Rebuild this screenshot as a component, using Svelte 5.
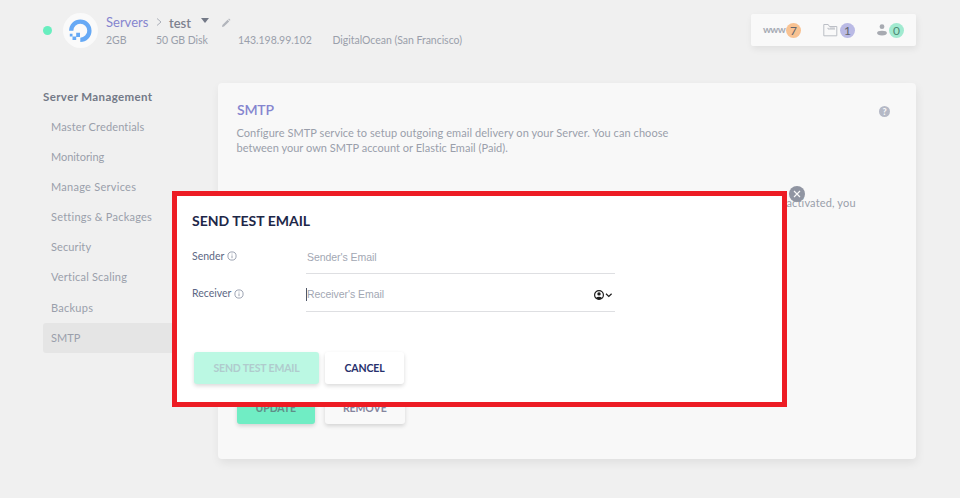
<script lang="ts">
  interface NavItem {
    label: string;
    spacing: number;
  }

  const nav: NavItem[] = [
    { label: "Master Credentials", spacing: 0.14 },
    { label: "Monitoring", spacing: -0.05 },
    { label: "Manage Services", spacing: 0.27 },
    { label: "Settings & Packages", spacing: 0.23 },
    { label: "Security", spacing: 0.1 },
    { label: "Vertical Scaling", spacing: 0.2 },
    { label: "Backups", spacing: 0.25 },
    { label: "SMTP", spacing: 0 },
  ];

  let active = $state("SMTP");
  let sender = $state("");
  let receiver = $state("");
  let open = $state(true);
</script>

{#snippet info()}
  <svg class="info" viewBox="0 0 10 10" width="10" height="10">
    <circle cx="5" cy="5" r="4.1" />
    <path d="M5 4.4v2.8M5 2.6v.9" />
  </svg>
{/snippet}

<div class="page">
  <header>
    <span class="status"></span>
    <span class="logo">
      <svg viewBox="0 0 24 24" width="24" height="24">
        <path class="ring" d="M2.2 11.7A9.1 9.1 0 1 1 11.3 20.8" />
        <path class="bits" d="M7.2 13.8h3.8v4.2H7.2zM3.5 17.6h3.7v3.5H3.5zM.8 14.8h2.7v2.6H.8z" />
      </svg>
    </span>
    <div class="server">
      <div class="crumbs">
        <a href="#servers">Servers</a>
        <svg class="sep" viewBox="0 0 6 8" width="6" height="8"><path d="M1 .5l4 3.5-4 3.5" /></svg>
        <strong>test</strong>
        <svg class="drop" viewBox="0 0 8 5" width="8" height="5"><path d="M0 0h8L4 5z" /></svg>
        <svg class="pencil" viewBox="0 0 10 10" width="10" height="10">
          <path d="M1 9l.4-2L6.6 1.8 8.2 3.4 3 8.6zM7.2 1.2L8 .5 9.5 2l-.8.8z" />
        </svg>
      </div>
      <div class="specs">
        <span class="ram">2GB</span>
        <span class="disk">50 GB Disk</span>
        <span class="ip">143.198.99.102</span>
        <span class="host">DigitalOcean (San Francisco)</span>
      </div>
    </div>
    <div class="stats">
      <span class="www">www</span>
      <b class="count orange">7</b>
      <svg class="folder" viewBox="0 0 15 14" width="15" height="14">
        <path d="M.8 12.8V1.5h4.4l1.2 2h7.4v9.3z" />
        <path d="M5 6h7M5 4.8v1.2M6.8 5h5" />
      </svg>
      <b class="count violet">1</b>
      <svg class="user" viewBox="0 0 10 12" width="10" height="12">
        <circle cx="5" cy="2.7" r="2.4" />
        <ellipse cx="5" cy="9.1" rx="4.9" ry="2.4" />
      </svg>
      <b class="count green">0</b>
    </div>
  </header>

  <div class="content">
    <nav>
      <h2>Server Management</h2>
      {#each nav as item}
        <button
          class="nav-item"
          class:active={active === item.label}
          style="letter-spacing: {item.spacing}px"
          onclick={() => (active = item.label)}
        >
          {item.label}
        </button>
      {/each}
    </nav>

    <main>
      <div class="title">
        <h1>SMTP</h1>
        <span class="help">?</span>
      </div>
      <p>
        <span class="line1">Configure SMTP service to setup outgoing email delivery on your Server. You can choose</span><br />
        <span class="line2">between your own SMTP account or Elastic Email (Paid).</span>
      </p>
      <p class="note">activated, you</p>
      <div class="actions">
        <button class="btn update">UPDATE</button>
        <button class="btn remove">REMOVE</button>
      </div>
    </main>
  </div>

  {#if open}
    <div class="dialog">
      <h3>SEND TEST EMAIL</h3>
      <div class="field">
        <span class="label">Sender {@render info()}</span>
        <div class="input">
          <input placeholder="Sender's Email" bind:value={sender} />
        </div>
      </div>
      <div class="field">
        <span class="label">Receiver {@render info()}</span>
        <div class="input focused">
          <input placeholder="Receiver's Email" bind:value={receiver} />
          <svg class="contact" viewBox="0 0 19 10" width="19" height="10">
            <circle class="o" cx="5" cy="5" r="4.4" />
            <circle cx="5" cy="3.9" r="1.7" />
            <path d="M1.8 7.9Q5 5.4 8.2 7.9Q5 10.8 1.8 7.9z" />
            <path class="o" d="M12 3.8l2.8 2.6 2.8-2.6" />
          </svg>
        </div>
      </div>
      <div class="buttons">
        <button class="btn send">SEND TEST EMAIL</button>
        <button class="btn cancel" onclick={() => (open = false)}>CANCEL</button>
      </div>
    </div>
    <button class="close" aria-label="Close" onclick={() => (open = false)}>
      <svg viewBox="0 0 8 8" width="8" height="8"><path d="M1 1l6 6M7 1L1 7" /></svg>
    </button>
  {/if}
</div>

<style>
  :global(body) {
    background: #f0f0f0;
  }

  .page {
    position: relative;
    box-sizing: border-box;
    height: 498px;
    padding: 13px 44px 0 43px;
    overflow: hidden;
    background: #f0f0f0;
    color: #9a9fab;
    font: 11px/15px Lato, "Open Sans", sans-serif;
  }

  h1, h2, h3, p {
    margin: 0;
  }

  button {
    padding: 0;
    border: 0;
    background: none;
    color: inherit;
    font: inherit;
    white-space: nowrap;
  }

  svg {
    flex: none;
    fill: none;
  }

  header {
    display: flex;
    height: 70px;
  }

  .status {
    width: 9px;
    height: 9px;
    margin-top: 13px;
    border-radius: 50%;
    background: #68eebf;
  }

  .logo {
    display: flex;
    align-items: center;
    justify-content: center;
    width: 35px;
    height: 35px;
    margin-left: 11px;
    border-radius: 50%;
    background: #fafafa;
  }

  .ring {
    stroke: #66a9f5;
    stroke-width: 4.3;
  }

  .bits {
    fill: #66a9f5;
  }

  .server {
    margin-left: 8px;
  }

  .crumbs {
    display: flex;
    align-items: center;
    height: 18px;
    font-size: 13px;
    line-height: 18px;
  }

  .crumbs a {
    width: 42px;
    color: #8585cf;
    text-decoration: none;
  }

  .sep {
    margin-left: 8px;
    stroke: #abafb8;
  }

  .crumbs strong {
    width: 21px;
    margin: 2px 0 0 7px;
    color: #7d818f;
    font-weight: 600;
  }

  .drop {
    margin: -4px 0 0 11px;
    fill: #737987;
  }

  .pencil {
    margin: 2px 0 0 12px;
    fill: #b2b5bc;
  }

  .specs {
    display: flex;
    margin-top: 2px;
    font-size: 10.5px;
    white-space: nowrap;
  }

  .ram {
    width: 50px;
  }

  .disk {
    width: 82px;
    letter-spacing: -0.05px;
  }

  .ip {
    width: 94.5px;
    letter-spacing: -0.05px;
  }

  .host {
    letter-spacing: -0.03px;
  }

  .stats {
    display: flex;
    align-items: center;
    box-sizing: border-box;
    width: 165px;
    height: 32px;
    margin: 1px 0 0 auto;
    padding-left: 12px;
    border-radius: 2px;
    background: #f9f9f9;
    box-shadow: 1px 3px 7px rgba(0, 0, 0, 0.07);
  }

  .www {
    width: 21px;
    margin-top: -1px;
    color: #a5a9b3;
    font-size: 10px;
    font-weight: 700;
    letter-spacing: -0.7px;
  }

  .count {
    width: 15px;
    height: 15px;
    margin-left: 2px;
    border-radius: 50%;
    color: #62666c;
    font-size: 12px;
    font-weight: 400;
    text-align: center;
  }

  .orange {
    background: #f8c292;
  }

  .violet {
    background: #babae5;
  }

  .green {
    background: #a1ead0;
    color: #4e8874;
  }

  .folder {
    margin-left: 22px;
    stroke: #b4b8c0;
    stroke-width: 0.9;
  }

  .user {
    margin-left: 22px;
    fill: #a7aab1;
  }

  .content {
    display: flex;
  }

  nav {
    width: 129px;
    margin-right: 46px;
  }

  nav h2 {
    margin: 6px 0 8px;
    color: #737987;
    font-size: 11.5px;
    font-weight: 700;
    letter-spacing: 0.38px;
    line-height: 15px;
    white-space: nowrap;
  }

  .nav-item {
    display: block;
    width: 175px;
    height: 30px;
    margin-bottom: 0.1px;
    padding: 0 0 1px 8px;
    border-radius: 3px 0 0 3px;
    text-align: left;
  }

  .active {
    background: #e5e5e5;
  }

  main {
    box-sizing: border-box;
    width: 698px;
    height: 376px;
    padding: 17px 19px 0;
    border-radius: 4px;
    background: #f8f8f8;
    box-shadow: 1px 4px 10px rgba(0, 0, 0, 0.07);
    white-space: nowrap;
  }

  .title {
    display: flex;
    justify-content: space-between;
  }

  h1 {
    color: #8585cf;
    font-size: 14px;
    font-weight: 600;
    letter-spacing: -0.2px;
    line-height: 20px;
  }

  .help {
    width: 11px;
    height: 11px;
    margin: 6px 7px 0 0;
    border-radius: 50%;
    background: #b5b9c6;
    color: #f8f8f8;
    font-size: 9px;
    font-weight: 900;
    line-height: 11px;
    text-align: center;
  }

  main p {
    margin: 5px 0 0 -0.5px;
  }

  .line1 {
    letter-spacing: 0.07px;
  }

  .line2 {
    letter-spacing: 0.02px;
  }

  main .note {
    margin: 40px 0 0 549.5px;
    letter-spacing: 0.15px;
  }

  .actions {
    display: flex;
    gap: 10px;
    margin-top: 182px;
  }

  .btn {
    height: 32px;
    border-radius: 3px;
    box-shadow: 0 2px 4px rgba(0, 0, 0, 0.15);
    font-size: 10.5px;
    font-weight: 700;
    line-height: 32px;
    text-align: center;
  }

  .update {
    width: 77.5px;
    background: #70edc4;
    color: #5f8f88;
    letter-spacing: -0.1px;
  }

  .remove {
    width: 80.5px;
    background: #f9f9f9;
    color: #85859e;
    letter-spacing: -0.1px;
  }

  .dialog {
    position: absolute;
    top: 191px;
    left: 172px;
    box-sizing: border-box;
    width: 614.5px;
    height: 216px;
    padding: 16px 15px 0;
    border: 5px solid #ed1c24;
    background: #fff;
  }

  h3 {
    margin-bottom: 16px;
    color: #1d2748;
    font-size: 14px;
    font-weight: 700;
    line-height: 18px;
  }

  .field {
    display: flex;
    height: 37.5px;
  }

  .label {
    display: flex;
    gap: 3px;
    align-items: center;
    width: 114px;
    height: 20px;
    color: #5c6784;
    font-size: 10.5px;
  }

  .info {
    stroke: #858da0;
    stroke-width: 0.8;
  }

  .input {
    display: flex;
    align-items: center;
    box-sizing: border-box;
    width: 309px;
    height: 28px;
    padding: 0 2px 5px 0;
    border-bottom: 1px solid #dedfe2;
  }

  .input input {
    flex: 1;
    padding: 0 0 0 1px;
    border: 0;
    outline: 0;
    background: none;
    font: 10.5px/13px "Liberation Sans", Arial, sans-serif;
    letter-spacing: -0.05px;
  }

  .input input::placeholder {
    color: #a2a7b3;
  }

  .focused::before {
    width: 1px;
    height: 13px;
    margin-right: -1px;
    background: #505768;
    content: "";
  }

  .contact {
    fill: #1c1c1c;
  }

  .contact .o {
    fill: none;
    stroke: #1c1c1c;
    stroke-width: 1.2;
  }

  .buttons {
    display: flex;
    gap: 6px;
    margin: 31px 0 0 2px;
  }

  .send {
    width: 125px;
    background: #bbf8e3;
    color: #b0cbcd;
    letter-spacing: -0.16px;
  }

  .cancel {
    width: 79px;
    background: #fff;
    color: #27306c;
    letter-spacing: -0.1px;
  }

  .close {
    position: absolute;
    top: 186px;
    left: 789px;
    display: flex;
    align-items: center;
    justify-content: center;
    width: 16px;
    height: 16px;
    border-radius: 50%;
    background: #9095a2;
  }

  .close svg {
    stroke: #f8f8f8;
    stroke-width: 1.2;
  }
</style>
